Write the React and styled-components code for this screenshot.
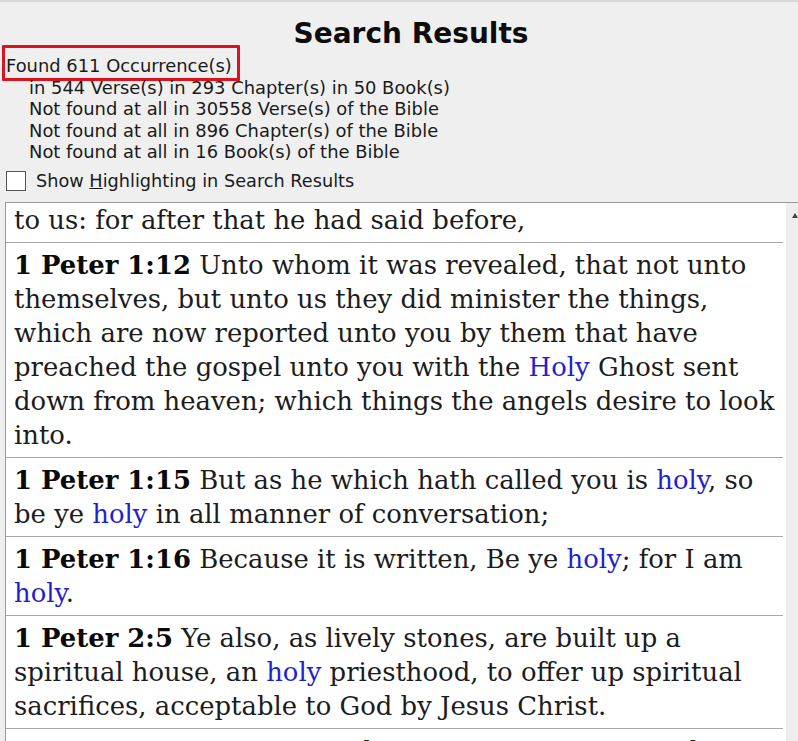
import styled, { createGlobalStyle } from "styled-components";

const verses = [
  {
    partial: true,
    parts: [{ t: "to us: for after that he had said before," }],
  },
  {
    ref: "1 Peter 1:12",
    parts: [
      {
        t: " Unto whom it was revealed, that not unto themselves, but unto us they did minister the things, which are now reported unto you by them that have preached the gospel unto you with the ",
      },
      { t: "Holy", hit: true },
      {
        t: " Ghost sent down from heaven; which things the angels desire to look into.",
      },
    ],
  },
  {
    ref: "1 Peter 1:15",
    parts: [
      { t: " But as he which hath called you is " },
      { t: "holy", hit: true },
      { t: ", so be ye " },
      { t: "holy", hit: true },
      { t: " in all manner of conversation;" },
    ],
  },
  {
    ref: "1 Peter 1:16",
    parts: [
      { t: " Because it is written, Be ye " },
      { t: "holy", hit: true },
      { t: "; for I am " },
      { t: "holy", hit: true },
      { t: "." },
    ],
  },
  {
    ref: "1 Peter 2:5",
    parts: [
      { t: " Ye also, as lively stones, are built up a spiritual house, an " },
      { t: "holy", hit: true },
      {
        t: " priesthood, to offer up spiritual sacrifices, acceptable to God by Jesus Christ.",
      },
    ],
  },
  {
    ref: "1 Peter 2:9",
    parts: [
      {
        t: " But ye are a chosen generation, a royal priesthood, an ",
      },
      { t: "holy", hit: true },
      { t: " nation, a peculiar people;" },
    ],
  },
];

const stats = [
  "in 544 Verse(s) in 293 Chapter(s) in 50 Book(s)",
  "Not found at all in 30558 Verse(s) of the Bible",
  "Not found at all in 896 Chapter(s) of the Bible",
  "Not found at all in 16 Book(s) of the Bible",
];

const App = () => {
  return (
    <>
      <GlobalStyle />
      <Page>
        <Title>Search Results</Title>

        <Summary>
          <Found>Found 611 Occurrence(s)</Found>
          {stats.map((s) => (
            <StatLine key={s}>{s}</StatLine>
          ))}
        </Summary>

        <CheckRow>
          <Box />
          <span>
            Show <u>H</u>ighlighting in Search Results
          </span>
        </CheckRow>

        <Pane>
          <List>
            {verses.map((v, i) => (
              <Row key={i} $partial={v.partial}>
                {v.ref && <Ref>{v.ref}</Ref>}
                {v.parts.map((p, j) =>
                  p.hit ? <Hit key={j}>{p.t}</Hit> : <span key={j}>{p.t}</span>
                )}
              </Row>
            ))}
          </List>
          <Scrollbar>
            <Arrow />
          </Scrollbar>
        </Pane>
      </Page>
    </>
  );
};

const GlobalStyle = createGlobalStyle`
  html, body {
    margin: 0;
    padding: 0;
    background: #efefef;
    overflow: hidden;
  }
`;

const Page = styled.div`
  width: 798px;
  height: 741px;
  overflow: hidden;
  display: flex;
  flex-direction: column;
  font-family: "DejaVu Sans", sans-serif;
  color: #111;
  border-top: 2px solid #d8d8d8;
  box-sizing: border-box;
`;

const Title = styled.h1`
  margin: 0;
  padding-top: 17px;
  padding-left: 24px;
  text-align: center;
  font-size: 28px;
  line-height: 30px;
  font-weight: bold;
  color: #0d0d0d;
`;

const Summary = styled.div`
  display: flex;
  flex-direction: column;
  align-items: flex-start;
  font-size: 17.9px;
  line-height: 21.3px;
  color: #1a1a1a;
`;

const Found = styled.div`
  margin: -4px 0 -4px 2px;
  padding: 6px 5px 0 1px;
  border: 3px solid #d9141e;
  border-radius: 1px;
  line-height: 24px;
`;

const StatLine = styled.div`
  padding-left: 29px;
`;

const CheckRow = styled.label`
  display: flex;
  align-items: center;
  gap: 10px;
  padding: 7px 0 0 6px;
  height: 24px;
  font-size: 17.7px;
  color: #1a1a1a;
`;

const Box = styled.span`
  width: 20px;
  height: 20px;
  border: 1px solid #555;
  background: #fff;
  box-sizing: border-box;
`;

const Pane = styled.div`
  display: flex;
  margin: 9px 0 0 5px;
  border-top: 1px solid #9a9a9a;
  border-left: 1px solid #9a9a9a;
  flex: 1;
  min-height: 0;
`;

const List = styled.div`
  width: 781px;
  background: #fff;
  padding-right: 3px;
  box-sizing: border-box;
  font-family: "DejaVu Serif", serif;
  font-size: 25.9px;
  line-height: 34px;
  color: #1c1c1c;
  overflow: hidden;
`;

const Row = styled.div`
  padding: ${(p) => (p.$partial ? "0 4px 5px 8px" : "5px 4px 5px 8px")};
  border-bottom: 1px solid #a8a8a8;
`;

const Ref = styled.b`
  color: #0a0a0a;
`;

const Hit = styled.span`
  color: #1f1fd0;
`;

const Scrollbar = styled.div`
  flex: 1;
  background: #eeeeee;
  padding: 10px 0 0 6px;
`;

const Arrow = styled.div`
  width: 0;
  height: 0;
  border-left: 3px solid transparent;
  border-right: 3px solid transparent;
  border-bottom: 5px solid #444;
`;

export default App;
